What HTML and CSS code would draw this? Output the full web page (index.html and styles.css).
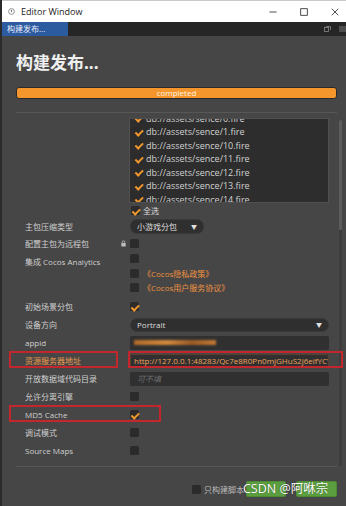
FILE: index.html
```html
<!DOCTYPE html>
<html lang="zh-CN">
<head>
    <meta charset="UTF-8">
    <meta name="viewport" content="width=device-width, initial-scale=1.0">
    <title>Editor Window</title>
    <link rel="stylesheet" href="styles.css">
</head>
<body>

<div class="window">
    <div class="titlebar">
        <svg class="app-icon" viewBox="0 0 8 8"><circle cx="4" cy="4" r="3.3" fill="none" stroke="#777" stroke-width="0.9"/><path d="M4 1.8 C5 3 5 4.2 4 5.2 C3 4.2 3 3 4 1.8Z" fill="#777"/></svg>
        <span class="title">Editor Window</span>
        <div class="win-controls">
            <svg viewBox="0 0 9 9"><path d="M0.5 4.5 H8.5" stroke="#222" stroke-width="0.9"/></svg>
            <svg viewBox="0 0 9 9"><rect x="0.8" y="0.8" width="7.4" height="7.4" fill="none" stroke="#222" stroke-width="0.9"/></svg>
            <svg viewBox="0 0 9 9"><path d="M0.8 0.8 L8.2 8.2 M8.2 0.8 L0.8 8.2" stroke="#222" stroke-width="0.9"/></svg>
        </div>
    </div>

    <div class="tabbar">
        <div class="tab">构建发布...</div>
        <div class="tab-icons">
            <svg viewBox="0 0 7 6"><rect x="0.5" y="1.5" width="4" height="4" fill="none" stroke="#8a8a8a" stroke-width="0.8"/><path d="M2 0.5 H6.5 V4" fill="none" stroke="#8a8a8a" stroke-width="0.8"/></svg>
            <svg viewBox="0 0 7 6"><path d="M0 1 H7 M0 3 H7 M0 5 H7" stroke="#8a8a8a" stroke-width="0.8"/></svg>
        </div>
    </div>

    <div class="panel">
        <h1>构建发布...</h1>
        <div class="progress">completed</div>
        <div class="sep"></div>

        <div class="scroll">
            <div class="scroll-body">
                <div class="scene-list">
                    <div class="scene-inner">
                        <div class="scene"><span class="check on"></span>db://assets/sence/0.fire</div>
                        <div class="scene"><span class="check on"></span>db://assets/sence/1.fire</div>
                        <div class="scene"><span class="check on"></span>db://assets/sence/10.fire</div>
                        <div class="scene"><span class="check on"></span>db://assets/sence/11.fire</div>
                        <div class="scene"><span class="check on"></span>db://assets/sence/12.fire</div>
                        <div class="scene"><span class="check on"></span>db://assets/sence/13.fire</div>
                        <div class="scene"><span class="check on"></span>db://assets/sence/14.fire</div>
                    </div>
                </div>
                <div class="select-all"><span class="check on"></span>全选</div>

                <div class="row">
                    <div class="label">主包压缩类型</div>
                    <div class="select small"><span>小游戏分包</span><span class="caret">▼</span></div>
                </div>
                <div class="row short">
                    <div class="label">配置主包为远程包
                        <svg class="lock" viewBox="0 0 5 7"><path d="M1.2 3 V2 A1.3 1.3 0 0 1 3.8 2 V3" fill="none" stroke="#bbb" stroke-width="0.8"/><rect x="0.3" y="3" width="4.4" height="3.6" rx="0.5" fill="#bbb"/></svg>
                    </div>
                    <div><span class="check"></span></div>
                </div>
                <div class="row group">
                    <div class="label">集成 Cocos Analytics</div>
                    <div class="opts">
                        <div class="opt"><span class="check"></span></div>
                        <div class="opt"><span class="check"></span><span class="link">《Cocos隐私政策》</span></div>
                        <div class="opt"><span class="check"></span><span class="link">《Cocos用户服务协议》</span></div>
                    </div>
                </div>
                <div class="row">
                    <div class="label">初始场景分包</div>
                    <div><span class="check on"></span></div>
                </div>
                <div class="row">
                    <div class="label">设备方向</div>
                    <div class="select"><span>Portrait</span><span class="caret">▼</span></div>
                </div>
                <div class="row">
                    <div class="label">appid</div>
                    <div class="input"><div class="blur"></div></div>
                </div>
                <div class="row">
                    <div class="label hl">资源服务器地址</div>
                    <div class="input url">http://127.0.0.1:48283/Qc7e8R0Pn0mjGHuS2j6eifYC\</div>
                </div>
                <div class="row">
                    <div class="label">开放数据域代码目录</div>
                    <div class="input"><span class="placeholder">可不填</span></div>
                </div>
                <div class="row">
                    <div class="label">允许分离引擎</div>
                    <div><span class="check"></span></div>
                </div>
                <div class="row">
                    <div class="label">MD5 Cache</div>
                    <div><span class="check on"></span></div>
                </div>
                <div class="row">
                    <div class="label">调试模式</div>
                    <div><span class="check"></span></div>
                </div>
                <div class="row">
                    <div class="label">Source Maps</div>
                    <div><span class="check"></span></div>
                </div>
            </div>
            <div class="scrollbar"><div class="thumb"></div></div>
        </div>

        <div class="sep bottom"></div>
        <div class="footer">
            <div class="footer-check"><span class="check"></span>只构建脚本</div>
            <div class="btn first"></div>
            <div class="btn"></div>
        </div>
    </div>

    <!-- annotations drawn over the screenshot -->
    <div class="mark mark-label"></div>
    <div class="mark mark-input"></div>
    <div class="mark mark-md5"></div>
    <div class="watermark">CSDN @阿咻宗</div>
</div>

</body>
</html>
```

FILE: styles.css
```css
* {
    box-sizing: border-box;
}

body {
    margin: 0;
    width: 346px;
    height: 506px;
    overflow: hidden;
    background-color: #2a2a2a;
    font-family: "Open Sans", "Noto Sans CJK SC", sans-serif;
}

.window {
    position: relative;
    margin-left: 2px;
    width: 344px;
    height: 506px;
    display: flex;
    flex-direction: column;
    background-color: #464646;
}

/* title bar */
.titlebar {
    height: 22px;
    flex-shrink: 0;
    background-color: #fff;
    border-top: 1px solid #c9c9c9;
    display: flex;
    align-items: center;
    padding: 0 7px 0 6px;
    font-size: 9px;
    color: #1a1a1a;
}

.app-icon {
    width: 7px;
    height: 7px;
    margin-right: 6px;
}

.win-controls {
    margin-left: auto;
    display: flex;
    align-items: center;
}

.win-controls svg {
    width: 8px;
    height: 8px;
    margin-left: 23px;
}

/* tab bar */
.tabbar {
    height: 14px;
    flex-shrink: 0;
    background-color: #262626;
    display: flex;
}

.tab {
    width: 66px;
    background-color: #2d5b9f;
    color: #eef2ff;
    font-size: 8px;
    line-height: 14px;
    padding-left: 5px;
}

.tab-icons {
    margin-left: auto;
    display: flex;
    align-items: center;
}

.tab-icons svg {
    width: 7px;
    height: 6px;
    margin-right: 8px;
}

.tab-icons svg:last-child {
    margin-right: 0;
}

/* panel */
.panel {
    flex: 1;
    padding: 0 9px 0 14px;
    display: flex;
    flex-direction: column;
}

h1 {
    margin: 17px 0 0;
    height: 20px;
    font-size: 17px;
    line-height: 20px;
    font-weight: bold;
    color: #efefef;
}

.progress {
    margin-top: 14px;
    height: 12px;
    border: 1px solid #2a2a2a;
    border-radius: 3px;
    background-color: #f4962c;
    color: #fff4e4;
    font-size: 8px;
    line-height: 10px;
    text-align: center;
}

.sep {
    margin-top: 13px;
    height: 1px;
    background-color: #575757;
}

.sep.bottom {
    margin-top: 0;
}

.scroll {
    height: 353px;
    display: flex;
    margin-right: -6px;
}

.scroll-body {
    width: 321px;
    overflow: hidden;
}

.scrollbar {
    margin: 7px 0 0 2px;
    width: 3px;
    height: 346px;
    background-color: #3d3d3d;
    border-radius: 2px;
}

.scrollbar .thumb {
    height: 110px;
    background-color: #5c5c5c;
    border-radius: 2px;
}

/* scene list */
.scene-list {
    margin: 5px 0 0 113px;
    width: 200px;
    height: 85px;
    background-color: #2d2d2d;
    border: 1px solid #505050;
    overflow: hidden;
}

.scene-inner {
    margin-top: -7.75px;
}

.scene {
    height: 13.5px;
    display: flex;
    align-items: center;
    gap: 3px;
    padding-left: 4px;
    font-size: 9px;
    color: #d2d2d2;
    white-space: nowrap;
}

.check {
    display: inline-block;
    position: relative;
    width: 9px;
    height: 9px;
    flex-shrink: 0;
    background-color: #2b2b2b;
    border-radius: 1.5px;
    vertical-align: middle;
}

.check.on::after {
    content: "";
    position: absolute;
    left: 3px;
    top: 0.5px;
    width: 2.5px;
    height: 5.5px;
    border-right: 2px solid #f0962e;
    border-bottom: 2px solid #f0962e;
    transform: rotate(45deg);
}

.select-all {
    margin: 1px 0 0 115px;
    height: 13px;
    display: flex;
    align-items: center;
    gap: 3px;
    font-size: 8px;
    color: #dcdcdc;
}

/* form rows */
.row {
    display: grid;
    grid-template-columns: 114px 199px;
    height: 18px;
    align-items: center;
}

.row.short {
    height: 16.5px;
}

.row.group {
    height: 46px;
    align-items: start;
}

.row > div {
    display: flex;
    align-items: center;
}

.label {
    padding-left: 9px;
    font-size: 8px;
    color: #cfcfcf;
    white-space: nowrap;
}

.row.group .label {
    height: 18px;
    padding-top: 1px;
}

.label.hl {
    color: #ec9a4c;
}

.lock {
    width: 5px;
    height: 7px;
    margin: 0 4px 0 auto;
}

.opts {
    flex-direction: column;
    align-items: stretch !important;
}

.opt {
    height: 14.5px;
    display: flex;
    align-items: center;
    gap: 4px;
}

.link {
    font-size: 8px;
    color: #ee9240;
}

.select {
    height: 14px;
    border-radius: 7px;
    background-color: #2f2f2f;
    border: 1px solid #3a3a3a;
    padding: 0 6px;
    justify-content: space-between;
    font-size: 8px;
    color: #dedede;
}

.select.small {
    width: 74px;
    height: 15px;
}

.caret {
    font-size: 6px;
    color: #e0e0e0;
}

.input {
    height: 14px;
    border-radius: 2px;
    background-color: #303030;
    padding: 0 4px;
    font-size: 8px;
    color: #dedede;
    overflow: hidden;
    white-space: nowrap;
}

.input.url {
    padding-left: 3px;
    color: #f0a25c;
    border: 1px solid #5a4030;
}

.placeholder {
    padding-left: 3px;
    color: #6c6c6c;
    font-style: italic;
}

.blur {
    width: 82px;
    height: 5px;
    background: linear-gradient(90deg, #b06a2a, #d48a3e 40%, #9a5b26 70%, #c27a35);
    filter: blur(1.2px);
}

/* footer */
.footer {
    margin-top: 14px;
    height: 16px;
    display: flex;
    align-items: center;
    justify-content: flex-end;
}

.footer-check {
    display: flex;
    align-items: center;
    gap: 3px;
    font-size: 8px;
    color: #bdbdbd;
}

.btn {
    width: 41px;
    height: 16px;
    margin-left: 10px;
    background-color: #5b9e3f;
    border: 1px solid #4d8a34;
    border-radius: 2px;
}

.btn.first {
    width: 40px;
    margin-left: 2px;
}

/* red annotation boxes */
.mark {
    position: absolute;
    border: 2px solid #c3272d;
}

.mark-label {
    left: 7px;
    top: 351px;
    width: 109px;
    height: 17px;
}

.mark-input {
    left: 126px;
    top: 351px;
    width: 215px;
    height: 17px;
}

.mark-md5 {
    left: 7px;
    top: 405px;
    width: 152px;
    height: 17px;
}

.watermark {
    position: absolute;
    left: 241px;
    top: 480px;
    font-size: 12.5px;
    line-height: 18px;
    color: #fff;
    text-shadow: 0 0 1px rgba(0, 0, 0, 0.5);
    white-space: nowrap;
}
```
